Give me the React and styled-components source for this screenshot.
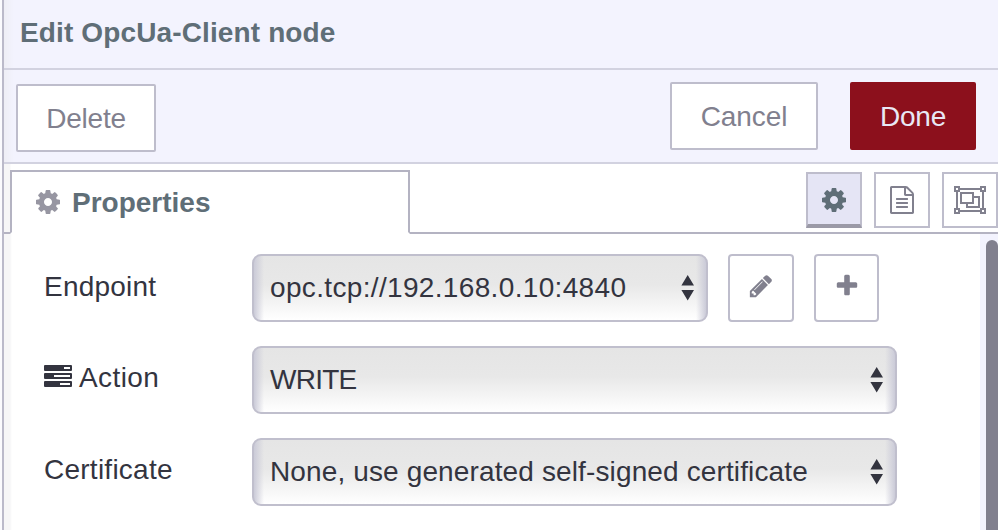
import React from "react";
import styled, { createGlobalStyle, css } from "styled-components";

const Global = createGlobalStyle`
  *, *::before, *::after { box-sizing: border-box; }
  html, body { margin: 0; padding: 0; overflow: hidden; background: #fbfbfe; }
  body { font: 28px/34px "Liberation Sans", Arial, sans-serif; color: #33343f; }
`;

const Tray = styled.main`
  width: 996px;
  height: 530px;
  margin-left: 2px;
  border-left: 2px solid #bbbaca;
  background: #fff;
  display: flex;
  flex-direction: column;
  overflow: hidden;
`;

const Header = styled.header`
  height: 70px;
  flex: none;
  padding: 16px 0 0 16px;
  border-bottom: 2px solid #d2d2e0;
  background: linear-gradient(90deg, #eeeef5, #f3f3fe 10px);
`;

const Title = styled.h1`
  margin: 0;
  font-size: 28px;
  line-height: 34px;
  font-weight: 700;
  letter-spacing: ${(p) => p.$spacing || 0}px;
  color: #5f6e77;
  white-space: nowrap;
`;

const Toolbar = styled.div`
  height: 94px;
  flex: none;
  display: flex;
  align-items: flex-start;
  padding: 12px 22px 0 12px;
  border-bottom: 2px solid #d2d2e0;
  background: linear-gradient(90deg, #eeeef5, #f3f3fe 10px);
`;

const Button = styled.button`
  width: ${(p) => p.$width}px;
  height: 68px;
  padding: 2px 0 0;
  border: 2px solid #bebdcc;
  border-radius: 2px;
  background: #fff;
  color: #81808e;
  font: inherit;
  letter-spacing: ${(p) => p.$spacing || 0}px;
  ${(p) => p.$primary && css`
    border-color: #8c101c;
    background: #8c101c;
    color: #e9e8f5;
  `}
`;

const DeleteButton = styled(Button)`
  margin: 2px auto 0 0;
`;

const DoneButton = styled(Button)`
  margin-left: 32px;
`;

const TabBar = styled.nav`
  height: 70px;
  flex: none;
  display: flex;
  align-items: flex-end;
  background: linear-gradient(90deg, #f6f6f7 6px, #fff 7px);
`;

const TabLead = styled.div`
  width: 6px;
  height: 70px;
  border-bottom: 2px solid #b4b3c2;
`;

const Tab = styled.div`
  width: 400px;
  height: 64px;
  display: flex;
  align-items: center;
  gap: 12px;
  padding: 0 0 0 24px;
  border: 2px solid #b4b3c2;
  border-bottom-color: #fff;
  background: #fff;
`;

const TabTitle = styled(Title).attrs({ as: "span" })`
  padding-top: 2px;
  line-height: 32px;
`;

const TabActions = styled.div`
  flex: 1;
  height: 70px;
  display: flex;
  justify-content: flex-end;
  gap: 12px;
  padding-top: 8px;
  border-bottom: 2px solid #b4b3c2;
`;

const IconTab = styled.button`
  width: 56px;
  height: 56px;
  padding: 0 1px 0 0;
  display: grid;
  place-items: center;
  border: 2px solid #bebdcc;
  background: #fff;
  color: #81808e;
  ${(p) => p.$active && css`
    border-bottom: 4px solid #9b9aa7;
    padding-top: 2px;
    background: #e5e5f5;
    color: #5f6e77;
  `}
`;

const Body = styled.section`
  flex: 1;
  display: flex;
  background: linear-gradient(90deg, #f6f6f7 6px, #fff 8px);
`;

const Form = styled.div`
  flex: 1;
  padding: 20px 0 0 40px;
  display: flex;
  flex-direction: column;
  gap: 24px;
`;

const Row = styled.div`
  height: 68px;
  display: flex;
`;

const Label = styled.label`
  width: 208px;
  height: 34px;
  margin-top: ${(p) => p.$top || 15}px;
  display: flex;
  gap: 7px;
  align-items: center;
  letter-spacing: ${(p) => p.$spacing || 0}px;
`;

const SelectBox = styled.div`
  width: ${(p) => p.$width}px;
  height: 68px;
  display: flex;
  justify-content: space-between;
  padding: 15px 11px 0 16px;
  border: 2px solid #c0bfcd;
  border-radius: 9px;
  background:
    linear-gradient(90deg, #cbcbd8, rgba(225, 225, 231, 0) 10px),
    linear-gradient(270deg, #cbcbd8, rgba(225, 225, 231, 0) 10px),
    linear-gradient(#e5e5e5 0%, #e8e8e8 45%, #fff 100%);
`;

const Value = styled.span`
  letter-spacing: ${(p) => p.$spacing || 0}px;
  white-space: nowrap;
`;

const SquareButton = styled.button`
  width: ${(p) => p.$width}px;
  height: 68px;
  margin-left: 20px;
  padding: 0 0 4px;
  display: grid;
  place-items: center;
  border: 2px solid #bebdcc;
  border-radius: 4px;
  background: #fff;
  color: #81808e;
`;

const ScrollTrack = styled.div`
  width: 18px;
  padding: 6px 0 0 6px;
  background: #f3f3fe;
`;

const ScrollThumb = styled.div`
  height: 310px;
  border-radius: 6px;
  background: #81808e;
`;

const Glyph = styled.svg`
  display: block;
  flex: none;
  fill: currentColor;
  color: ${(p) => p.$color || "inherit"};
`;

const Gear = ({ color }) => (
  <Glyph $color={color} width="24" height="24" viewBox="128 128 1536 1536">
    <path d="M1152 896q0-106-75-181t-181-75-181 75-75 181 75 181 181 75 181-75 75-181zm512-109v222q0 12-8 23t-20 13l-185 28q-19 54-39 91 35 50 107 138 10 12 10 25t-9 23q-27 37-99 108t-94 71q-12 0-26-9l-138-108q-44 23-91 38-16 136-29 186-7 28-36 28h-222q-14 0-24.5-8.5t-11.5-21.5l-28-184q-49-16-90-37l-141 107q-10 9-25 9-14 0-25-11-126-114-165-168-7-10-7-23 0-12 8-23 15-21 51-66.5t54-70.5q-27-50-41-99l-183-27q-13-2-21-12.5t-8-23.5v-222q0-12 8-23t19-13l186-28q14-46 39-92-40-57-107-138-10-12-10-24 0-10 9-23 26-36 98.5-107.5t94.5-71.5q13 0 26 10l138 107q44-23 91-38 16-136 29-186 7-28 36-28h222q14 0 24.5 8.5t11.5 21.5l28 184q49 16 90 37l142-107q9-9 24-9 13 0 25 10 129 119 165 170 7 8 7 22 0 12-8 23-15 21-51 66.5t-54 70.5q26 50 41 98l183 28q13 2 21 12.5t8 23.5z" />
  </Glyph>
);

const FileText = () => (
  <Glyph width="28" height="28" viewBox="0 0 1792 1792">
    <path d="M1596 380q28 28 48 76t20 88v1152q0 40-28 68t-68 28h-1344q-40 0-68-28t-28-68v-1600q0-40 28-68t68-28h896q40 0 88 20t76 48zm-444-244v376h376q-10-29-22-41l-313-313q-12-12-41-22zm384 1528v-1024h-416q-40 0-68-28t-28-68v-416h-768v1536h1280zm-1024-864q0-14 9-23t23-9h704q14 0 23 9t9 23v64q0 14-9 23t-23 9h-704q-14 0-23-9t-9-23v-64zm736 224q14 0 23 9t9 23v64q0 14-9 23t-23 9h-704q-14 0-23-9t-9-23v-64q0-14 9-23t23-9h704zm0 256q14 0 23 9t9 23v64q0 14-9 23t-23 9h-704q-14 0-23-9t-9-23v-64q0-14 9-23t23-9h704z" />
  </Glyph>
);

const ObjectGroup = () => (
  <Glyph width="32" height="28" viewBox="0 0 32 28">
    <path fillRule="evenodd" d="M0 0h6v2h20V0h6v6h-2v16h2v6h-6v-2H6v2H0v-6h2V6H0zM6 4v2H4v16h2v2h20v-2h2V6h-2V4zM2 2v2h2V2zM28 2v2h2V2zM2 24v2h2v-2zM28 24v2h2v-2z" />
    <path fillRule="evenodd" d="M6 6h14v4h6v12H12v-4H6zM8 8v8h10V8zM20 12v6h-6v2h10v-8z" />
  </Glyph>
);

const Pencil = () => (
  <Glyph width="26" height="26" viewBox="0 0 1792 1792">
    <path d="M491 1536l91-91-235-235-91 91v107h128v128h107zm523-928q0-22-22-22-10 0-17 7l-542 542q-7 7-7 17 0 22 22 22 10 0 17-7l542-542q7-7 7-17zm-54-192l416 416-832 832h-416v-416zm683 96q0 53-37 90l-166 166-416-416 166-165q36-38 90-38 53 0 91 38l235 234q37 39 37 91z" />
  </Glyph>
);

const Plus = () => (
  <Glyph width="26" height="26" viewBox="0 0 1792 1792">
    <path d="M1600 736v192q0 40-28 68t-68 28h-416v416q0 40-28 68t-68 28h-192q-40 0-68-28t-28-68v-416h-416q-40 0-68-28t-28-68v-192q0-40 28-68t68-28h416v-416q0-40 28-68t68-28h192q40 0 68 28t28 68v416h416q40 0 68 28t28 68z" />
  </Glyph>
);

const Tasks = () => (
  <Glyph width="28" height="24" viewBox="0 0 28 24">
    <path fillRule="evenodd" d="M1 0h26q1 0 1 1v4q0 1-1 1H1q-1 0-1-1V1q0-1 1-1zM20 2v2h6V2zM1 8h26q1 0 1 1v4q0 1-1 1H1q-1 0-1-1V9q0-1 1-1zM10 10v2h16v-2zM1 16h26q1 0 1 1v4q0 1-1 1H1q-1 0-1-1v-4q0-1 1-1zM16 18v2h10v-2z" />
  </Glyph>
);

const TasksSlot = styled.span`
  padding-bottom: 2px;
`;

const Arrows = () => (
  <Glyph width="14" height="26" viewBox="0 0 14 26">
    <path d="M6.7 0l6.3 10.5H.4zM.4 15H13L6.7 25.5z" />
  </Glyph>
);

const ArrowSlot = styled.span`
  padding-top: 4px;
`;

const Select = ({ width, spacing, children }) => (
  <SelectBox $width={width}>
    <Value $spacing={spacing}>{children}</Value>
    <ArrowSlot><Arrows /></ArrowSlot>
  </SelectBox>
);

export default function App() {
  return (
    <>
      <Global />
      <Tray>
        <Header><Title $spacing={0.13}>Edit OpcUa-Client node</Title></Header>
        <Toolbar>
          <DeleteButton $width={140} $spacing={-0.2}>Delete</DeleteButton>
          <Button $width={148} $spacing={-0.1}>Cancel</Button>
          <DoneButton $width={126} $spacing={-0.2} $primary>Done</DoneButton>
        </Toolbar>
        <TabBar>
          <TabLead />
          <Tab><Gear color="#9796a2" /><TabTitle>Properties</TabTitle></Tab>
          <TabActions>
            <IconTab $active><Gear /></IconTab>
            <IconTab><FileText /></IconTab>
            <IconTab><ObjectGroup /></IconTab>
          </TabActions>
        </TabBar>
        <Body>
          <Form>
            <Row>
              <Label $top={16} $spacing={0.2}>Endpoint</Label>
              <Select width={456} spacing={0.34}>opc.tcp://192.168.0.10:4840</Select>
              <SquareButton $width={66}><Pencil /></SquareButton>
              <SquareButton $width={65}><Plus /></SquareButton>
            </Row>
            <Row>
              <Label $spacing={0.4}><TasksSlot><Tasks /></TasksSlot>Action</Label>
              <Select width={645} spacing={-0.75}>WRITE</Select>
            </Row>
            <Row>
              <Label $spacing={0.25}>Certificate</Label>
              <Select width={645} spacing={0.13}>None, use generated self-signed certificate</Select>
            </Row>
          </Form>
          <ScrollTrack><ScrollThumb /></ScrollTrack>
        </Body>
      </Tray>
    </>
  );
}
